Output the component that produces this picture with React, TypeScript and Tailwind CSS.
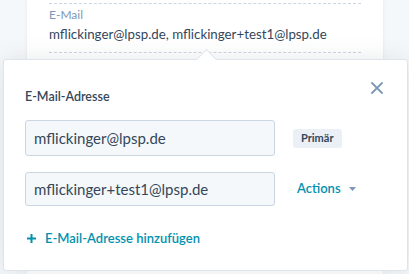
export default function App() {
  return (
    <div
      className="relative h-[274px] w-[409px] overflow-hidden bg-[#f5f8fa]"
      style={{ fontFamily: 'Lato, "Noto Sans", sans-serif' }}
    >
      {/* underlying record card */}
      <div className="ml-[27px] h-full w-[356px] bg-white px-[22px] pt-[3px] shadow-[0_0_4px_rgba(45,62,80,0.08)]">
        <div className="border-t border-dashed border-[#cbd6e2] pt-[4px]">
          <div className="text-[12px] leading-[14px] text-[#7c98b6]">E-Mail</div>
          <div className="mt-[4px] text-[13.3px] leading-[16px] text-[#33475b]">
            mflickinger@lpsp.de, mflickinger+test1@lpsp.de
          </div>
        </div>
        <div className="mt-[10px] border-t border-dashed border-[#cbd6e2] pt-[5px]">
          <div className="text-[12px] leading-[14px] text-[#7c98b6]">Adresszeile</div>
        </div>
      </div>

      {/* popover */}
      <div className="absolute left-[3px] top-[59px] h-[212px] w-[405px] rounded-[3px] border border-[#dfe3eb] bg-white shadow-[0_1px_24px_rgba(45,62,80,0.12)]">
        <div className="absolute -top-[8px] left-[195px] h-[15px] w-[15px] rotate-45 border-l border-t border-[#dfe3eb] bg-white" />
        <div className="relative px-[21px] pt-[19px]">
          <div className="flex items-start justify-between">
            <div className="pt-[10px] text-[12.5px] font-semibold leading-[16px] text-[#33475b]">E-Mail-Adresse</div>
            <svg className="mr-[3px] mt-[3px]" width="12" height="12" viewBox="0 0 12 12">
              <path d="M1 1l10 10M11 1L1 11" stroke="#7c98b6" strokeWidth="1.8" strokeLinecap="round" />
            </svg>
          </div>
          <div className="mt-[15px] flex items-center">
            <div className="flex h-[36px] w-[250px] items-center rounded-[3px] border border-[#cbd6e2] bg-[#f5f8fa] px-[8px] text-[15px] text-[#33475b]">
              mflickinger@lpsp.de
            </div>
            <span className="ml-[18px] flex h-[19px] items-center rounded-[3px] bg-[#eaf0f6] px-[8px] text-[11px] font-bold text-[#33475b]">
              Primär
            </span>
          </div>
          <div className="mt-[16px] flex items-center">
            <div className="flex h-[34px] w-[250px] items-center rounded-[3px] border border-[#cbd6e2] bg-[#f5f8fa] px-[8px] text-[15px] text-[#33475b]">
              mflickinger+test1@lpsp.de
            </div>
            <button className="ml-[22px] flex items-center text-[13px] font-semibold text-[#0091ae]">
              Actions
              <svg className="ml-[8px]" width="7" height="4" viewBox="0 0 7 4">
                <path d="M0 0h7L3.5 4z" fill="#7c98b6" />
              </svg>
            </button>
          </div>
          <button className="mt-[24px] flex items-center text-[13px] font-semibold leading-[16px] text-[#0091ae]">
            <svg className="ml-[2px] mr-[9px]" width="9" height="9" viewBox="0 0 9 9">
              <path d="M4.5 0v9M0 4.5h9" stroke="#0091ae" strokeWidth="2" />
            </svg>
            E-Mail-Adresse hinzufügen
          </button>
        </div>
      </div>
    </div>
  )
}
